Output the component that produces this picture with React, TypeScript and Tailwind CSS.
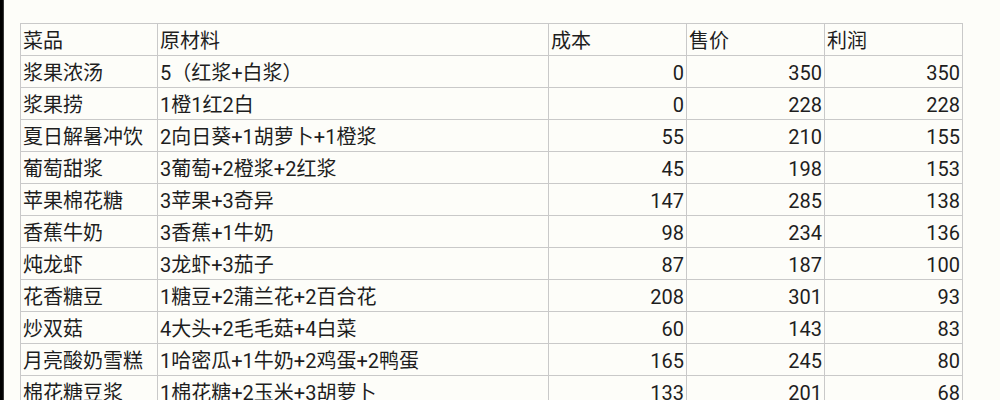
import React from 'react';

const rows: [string, string, number, number, number][] = [
  ['浆果浓汤', '5（红浆+白浆）', 0, 350, 350],
  ['浆果捞', '1橙1红2白', 0, 228, 228],
  ['夏日解暑冲饮', '2向日葵+1胡萝卜+1橙浆', 55, 210, 155],
  ['葡萄甜浆', '3葡萄+2橙浆+2红浆', 45, 198, 153],
  ['苹果棉花糖', '3苹果+3奇异', 147, 285, 138],
  ['香蕉牛奶', '3香蕉+1牛奶', 98, 234, 136],
  ['炖龙虾', '3龙虾+3茄子', 87, 187, 100],
  ['花香糖豆', '1糖豆+2蒲兰花+2百合花', 208, 301, 93],
  ['炒双菇', '4大头+2毛毛菇+4白菜', 60, 143, 83],
  ['月亮酸奶雪糕', '1哈密瓜+1牛奶+2鸡蛋+2鸭蛋', 165, 245, 80],
  ['棉花糖豆浆', '1棉花糖+2玉米+3胡萝卜', 133, 201, 68],
];

const cell = 'border border-[#c9c9c9] h-[31px] px-[2px] pt-[3px] pb-0 leading-[28px] whitespace-nowrap';

export default function App() {
  return (
    <div
      className="flex w-[1000px] h-[400px] overflow-hidden bg-[#fdfdf9] text-[#1e1e1e] text-[20px]"
      style={{ fontFamily: 'Roboto, "Noto Sans CJK SC", sans-serif' }}
    >
      <div className="w-[4px] shrink-0 bg-gradient-to-r from-black via-black to-[#555]" />
      <div className="pl-[16px] pt-[23px]">
        <table className="border-collapse table-fixed">
          <colgroup>
            <col className="w-[137px]" />
            <col className="w-[391px]" />
            <col className="w-[138px]" />
            <col className="w-[138px]" />
            <col className="w-[138px]" />
          </colgroup>
          <thead>
            <tr>
              <th className={`${cell} text-left font-normal`}>菜品</th>
              <th className={`${cell} text-left font-normal`}>原材料</th>
              <th className={`${cell} text-left font-normal`}>成本</th>
              <th className={`${cell} text-left font-normal`}>售价</th>
              <th className={`${cell} text-left font-normal`}>利润</th>
            </tr>
          </thead>
          <tbody>
            {rows.map(([name, mat, cost, price, profit]) => (
              <tr key={name}>
                <td className={cell}>{name}</td>
                <td className={cell}>{mat}</td>
                <td className={`${cell} text-right`}>{cost}</td>
                <td className={`${cell} text-right`}>{price}</td>
                <td className={`${cell} text-right`}>{profit}</td>
              </tr>
            ))}
          </tbody>
        </table>
      </div>
    </div>
  );
}
